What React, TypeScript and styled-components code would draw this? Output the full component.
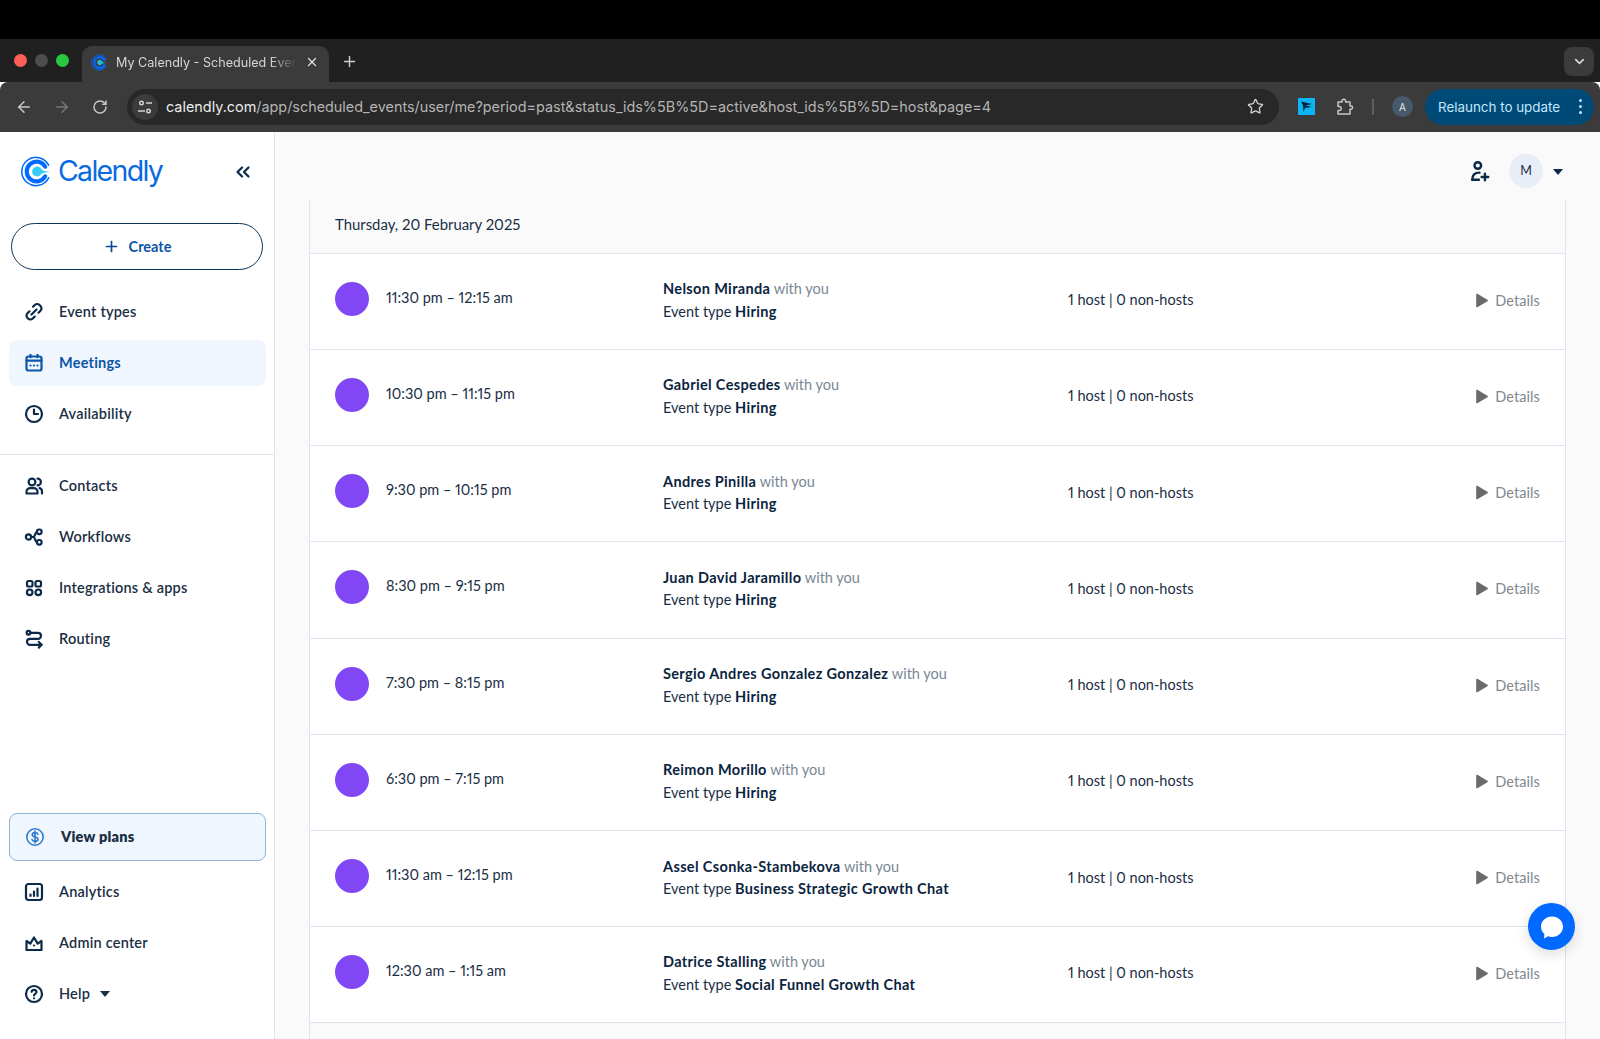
import React from "react";
import styled, { createGlobalStyle } from "styled-components";
import { ChevronDown, Plus, RotateCw, Star, X, ArrowLeft, ArrowRight, ChevronsLeft } from "lucide-react";

const GlobalStyle = createGlobalStyle`
  html, body { margin: 0; padding: 0; height: 100%; overflow: hidden; }
  body { font-family: Lato, "Open Sans", sans-serif; color: #1a2e44; font-variant-numeric: proportional-nums; }
  * { box-sizing: border-box; }
`;

const Page = styled.div`
  height: 1039px;
  display: flex;
  flex-direction: column;
  position: relative;
  overflow: hidden;
`;
const BlackBar = styled.div`
  height: 39px;
  background: #000;
`;
// browser chrome
const TabStrip = styled.div`
  height: 43px;
  background: #202020;
  display: flex;
  align-items: flex-end;
  padding-left: 14px;
`;
const Dot = styled.span<{ $color: string }>`
  width: 13px;
  height: 13px;
  border-radius: 50%;
  background: ${(p) => p.$color};
  margin-right: 8px;
  margin-bottom: 15px;
`;
const Tab = styled.div`
  width: 247px;
  height: 36px;
  margin-left: 5px;
  background: #3b3b3b;
  border-radius: 10px 10px 0 0;
  display: flex;
  align-items: center;
  padding: 0 10px 4px 9px;
  color: #d6d6d6;
  font-family: Inter, sans-serif;
  font-size: 12.6px;
`;
const TabTitle = styled.span`
  flex: 1;
  margin: 0 8px;
  white-space: nowrap;
  overflow: hidden;
  mask-image: linear-gradient(90deg, #000 85%, transparent);
`;
const NewTab = styled.div`
  margin-left: 12px;
  margin-bottom: 9px;
  height: 24px;
  display: flex;
  align-items: center;
  color: #d0d0d0;
`;
const TabMenu = styled.div`
  margin-left: auto;
  margin-right: 6px;
  margin-bottom: 6px;
  width: 30px;
  height: 29px;
  border-radius: 8px;
  background: #3b3b3b;
  color: #d8d8d8;
  display: flex;
  align-items: center;
  justify-content: center;
`;
const Toolbar = styled.div`
  height: 50px;
  background: #3b3b3b;
  border-radius: 8px 8px 0 0;
  display: flex;
  align-items: center;
  padding: 0 6px 1px 15px;
  color: #c8c8c8;
`;
const NavButton = styled.div<{ $dim?: boolean }>`
  width: 18px;
  margin-right: 20px;
  display: flex;
  justify-content: center;
  color: ${(p) => (p.$dim ? "#777" : "#c8c8c8")};
`;
const AddressBar = styled.div`
  width: 1152px;
  height: 36px;
  margin-left: -2px;
  border-radius: 18px;
  background: #282828;
  display: flex;
  align-items: center;
  padding: 0 15px 0 5px;
`;
const TuneBadge = styled.div`
  width: 26px;
  height: 26px;
  border-radius: 50%;
  background: #3b3b3b;
  display: flex;
  align-items: center;
  justify-content: center;
`;
const Url = styled.div`
  flex: 1;
  margin-left: 8px;
  font-family: Inter, sans-serif;
  font-size: 14.4px;
  color: #b4b4b4;
  white-space: nowrap;
  span {
    color: #ececec;
  }
`;
const ExtIcon = styled.div`
  width: 17px;
  height: 17px;
  margin-left: 19px;
  background: #0cb4f4;
  display: flex;
  align-items: center;
  justify-content: center;
`;
const PuzzleSlot = styled.div`
  margin-left: 21px;
  display: flex;
`;
const ToolbarSep = styled.div`
  width: 2px;
  height: 16px;
  margin-left: 18px;
  background: #5e5e5e;
`;
const ProfileBadge = styled.div`
  width: 21px;
  height: 21px;
  margin-left: 18px;
  border-radius: 50%;
  background: #47596a;
  color: #e4e8ec;
  font-family: Inter, sans-serif;
  font-size: 10px;
  display: flex;
  align-items: center;
  justify-content: center;
`;
const RelaunchPill = styled.div`
  width: 169px;
  height: 36px;
  margin-left: 12px;
  border-radius: 18px;
  background: #004a77;
  color: #c2e7ff;
  font-family: Inter, sans-serif;
  font-size: 13.4px;
  display: flex;
  align-items: center;
  justify-content: space-between;
  padding: 0 12px 0 13px;
  white-space: nowrap;
`;
const KebabDots = styled.div`
  display: flex;
  flex-direction: column;
  gap: 3px;
  i {
    width: 3px;
    height: 3px;
    border-radius: 50%;
    background: #c2e7ff;
  }
`;
// app
const Body = styled.div`
  flex: 1;
  display: flex;
  min-height: 0;
`;
const Sidebar = styled.aside`
  width: 275px;
  flex-shrink: 0;
  background: #fff;
  border-right: 1px solid #dfe3ea;
  display: flex;
  flex-direction: column;
  padding-bottom: 22px;
`;
const LogoRow = styled.div`
  height: 91px;
  padding: 0 20px 12px 21px;
  display: flex;
  align-items: center;
`;
const Wordmark = styled.span`
  margin-left: 6px;
  font-family: Inter, sans-serif;
  font-size: 28.5px;
  font-weight: 400;
  letter-spacing: -1.7px;
  color: #0a6ae0;
  margin-top: -2px;
`;
const CollapseButton = styled.div`
  margin-left: auto;
  display: flex;
  color: #0b2a4a;
`;
const CreateButton = styled.div`
  height: 47px;
  margin: 0 11px;
  border: 1px solid #0b3558;
  border-radius: 24px;
  display: flex;
  align-items: center;
  justify-content: center;
  gap: 9px;
  color: #0b56a8;
  font-size: 14.5px;
  font-weight: 700;
`;
const NavGroup = styled.nav<{ $top: number }>`
  display: flex;
  flex-direction: column;
  gap: 5px;
  padding: 0 9px;
  margin-top: ${(p) => p.$top}px;
`;
const NavItem = styled.div<{ $active?: boolean }>`
  height: 46px;
  width: 257px;
  border-radius: 8px;
  display: flex;
  align-items: center;
  padding: 0 0 1px 15px;
  gap: 15px;
  font-size: 14.5px;
  letter-spacing: 0.22px;
  font-weight: ${(p) => (p.$active ? 700 : 600)};
  color: ${(p) => (p.$active ? "#0b56a8" : "#1a2e44")};
  background: ${(p) => (p.$active ? "#f0f6fe" : "transparent")};
`;
const PlansItem = styled(NavItem)`
  height: 47.5px;
  background: #f0f6fe;
  border: 1px solid #8fb3dc;
  font-weight: 800;
  padding: 0 0 0 15px;
  gap: 16px;
  margin-bottom: 3.5px;
`;
const HelpCaret = styled.span`
  margin-left: -5px;
  width: 0;
  height: 0;
  border-left: 5.5px solid transparent;
  border-right: 5.5px solid transparent;
  border-top: 6px solid #1a2e44;
`;
const Divider = styled.div`
  height: 1px;
  background: #dfe3ea;
  margin-top: 17px;
`;
const BottomNav = styled(NavGroup)`
  margin-top: auto;
`;
const Main = styled.main`
  flex: 1;
  min-width: 0;
  background: #fafafa;
  display: flex;
  flex-direction: column;
  padding: 0 34px;
`;
const TopBar = styled.div`
  height: 68px;
  flex-shrink: 0;
  display: flex;
  align-items: center;
  justify-content: flex-end;
  margin-right: -34px;
  padding: 9px 37px 0 0;
  color: #0b2a4a;
`;
const UserAvatar = styled.div`
  width: 34px;
  height: 34px;
  margin-left: 18px;
  border-radius: 50%;
  background: #e8edf7;
  display: flex;
  align-items: center;
  justify-content: center;
  font-size: 12.5px;
  color: #1a2e44;
`;
const UserCaret = styled.span`
  margin-left: 10px;
  margin-top: 2px;
  width: 0;
  height: 0;
  border-left: 5.5px solid transparent;
  border-right: 5.5px solid transparent;
  border-top: 6px solid #0b2a4a;
`;
const Card = styled.section`
  flex: 1;
  border-left: 1px solid #dbe4f0;
  border-right: 1px solid #dbe4f0;
`;
const DateHeader = styled.div`
  height: 52.5px;
  padding: 0 25px 4px;
  display: flex;
  align-items: center;
  font-size: 14.9px;
  color: #1a2e44;
`;
const Row = styled.div`
  height: 96.25px;
  display: grid;
  grid-template-columns: 51px 277px 405px 1fr auto;
  align-items: center;
  padding: 0 25px;
  background: #fff;
  border-top: 1px solid #dde5ef;
  &:last-child {
    border-bottom: 1px solid #dde5ef;
  }
`;
const Bullet = styled.div`
  width: 34px;
  height: 34px;
  margin-bottom: 5px;
  border-radius: 50%;
  background: #8247f5;
`;
const TimeText = styled.div`
  margin-bottom: 8px;
  font-size: 14.5px;
  color: #1a2e44;
`;
const Invitee = styled.div`
  margin-bottom: 1px;
  font-size: 14.5px;
  line-height: 22.5px;
  color: #1a2e44;
  b {
    font-weight: 700;
    letter-spacing: 0.35px;
    color: #0b2440;
  }
`;
const WithYou = styled.span`
  color: #7a8794;
`;
const Hosts = styled.div`
  margin-bottom: 3px;
  font-size: 14.5px;
  color: #1a2e44;
`;
const Details = styled.div`
  display: flex;
  align-items: center;
  gap: 7px;
  margin-bottom: 2px;
  font-size: 14.5px;
  letter-spacing: 0.1px;
  color: #808890;
`;
const Triangle = styled.svg`
  display: block;
`;
const ChatBubble = styled.div`
  position: absolute;
  left: 1528px;
  top: 903px;
  width: 47px;
  height: 47px;
  border-radius: 50%;
  background: #0069ff;
  box-shadow: 0 4px 14px rgba(0, 0, 0, 0.14);
  display: flex;
  align-items: center;
  justify-content: center;
`;

const Ico = ({ children, size = 20, stroke = "#0b2a4a" }: { children: React.ReactNode; size?: number; stroke?: string }) => (
  <svg width={size} height={size} viewBox="0 0 20 20" fill="none" stroke={stroke} strokeWidth={2.2} strokeLinecap="round" strokeLinejoin="round">
    {children}
  </svg>
);

const CalendlyMark = ({ size }: { size: number }) => (
  <svg width={size} height={size} viewBox="0 0 32 32" fill="none" strokeLinecap="round">
    <path d="M28.5 9.500A14.600 14.600 0 1 0 28.500 22.500" stroke="#0069ff" strokeWidth="1.600" />
    <path d="M25 11A10.200 10.200 0 1 0 25 21" stroke="#0069ff" strokeWidth="4.200" />
    <path d="M11.500 16a5 5 0 0 1 9-3c1.500 2 3 3 8 3s-6.500 1-8 3a5 5 0 0 1-9-3z" fill="#1ec8f5" opacity="0.9" />
  </svg>
);

const LinkIcon = () => (
  <Ico>
    <path d="M9 4.800l1.800-1.800a3.300 3.300 0 0 1 4.700 0l1 1a3.300 3.300 0 0 1 0 4.700L14.500 10.700" />
    <path d="M12.500 7.500L7.500 12.500" />
    <path d="M5.500 9.300L3.500 11.300a3.300 3.300 0 0 0 0 4.700l.5.500a3.300 3.300 0 0 0 4.700 0l2-1.900" />
  </Ico>
);
const CalendarIcon = ({ stroke }: { stroke: string }) => (
  <Ico stroke={stroke}>
    <rect x="2.500" y="3.500" width="15" height="14" rx="2" />
    <path d="M2.500 7.600h15M6.500 1.800v2.400M13.500 1.800v2.400" />
    <path d="M6.500 12.500h.01M10 12.500h.01M13.500 12.500h.01" />
  </Ico>
);
const ClockIcon = () => (
  <Ico>
    <circle cx="10" cy="10" r="8" />
    <path d="M10 5.500V10h4" />
  </Ico>
);
const ContactsIcon = () => (
  <Ico>
    <circle cx="8" cy="6" r="3.400" />
    <path d="M2.500 17.500v-1.700a3.600 3.600 0 0 1 3.600-3.600h3.800a3.600 3.600 0 0 1 3.600 3.600v1.700z" />
    <path d="M13.500 2.600a3.400 3.400 0 0 1 0 6.800M15.500 12.200c1.500.3 2.500 1.700 2.500 3.400v1.900" />
  </Ico>
);
const WorkflowIcon = () => (
  <Ico>
    <circle cx="4.500" cy="10" r="2.600" />
    <rect x="13" y="2.500" width="4.600" height="4.600" rx="2" />
    <rect x="13" y="13" width="4.600" height="4.600" rx="2" />
    <path d="M7 10h2.500c1.500 0 1.500-5 3.500-5M9.500 10c1.500 0 1.500 5 3.500 5" />
  </Ico>
);
const GridIcon = () => (
  <Ico>
    <rect x="3" y="3" width="5.500" height="5.500" rx="1.600" />
    <rect x="11.500" y="3" width="5.500" height="5.500" rx="1.600" />
    <circle cx="5.700" cy="14.300" r="2.800" />
    <circle cx="14.300" cy="14.300" r="2.800" />
  </Ico>
);
const RoutingIcon = () => (
  <Ico>
    <circle cx="4.500" cy="3.800" r="1.900" />
    <path d="M6.500 3.800h7.500a3 3 0 0 1 0 6H6a3 3 0 0 0 0 6h11.500" />
    <path d="M14.800 13l2.800 2.800-2.800 2.800" />
  </Ico>
);
const DollarIcon = () => (
  <Ico stroke="#2f7ad0">
    <circle cx="10" cy="10" r="8.200" strokeWidth="1.600" />
    <path strokeWidth="1.600" d="M12.800 7.200c-.4-1-1.400-1.600-2.800-1.600-1.600 0-2.800.8-2.800 2.200 0 3 5.800 1.400 5.800 4.400 0 1.400-1.300 2.200-3 2.200-1.500 0-2.600-.7-3-1.800M10 4v12" />
  </Ico>
);
const ChartIcon = () => (
  <Ico>
    <rect x="2" y="2" width="16" height="16" rx="2.400" />
    <path d="M6.500 14v-1.500M10 14V9.500M13.500 14V6.500" />
  </Ico>
);
const CrownIcon = () => (
  <Ico>
    <path d="M2.500 8l3.800 2.600L10 4.500l3.700 6.100L17.500 8v9h-15z" />
    <path d="M10 12.500v.01" />
  </Ico>
);
const HelpIcon = () => (
  <Ico>
    <circle cx="10" cy="10" r="8" />
    <path d="M7.600 7.800A2.500 2.500 0 0 1 12.500 8c0 1.600-2.500 2-2.500 3.400M10 14.300v.01" />
  </Ico>
);
const UserPlusIcon = () => (
  <Ico size={22}>
    <circle cx="8" cy="5" r="3" />
    <path d="M3 18c0-3.500 1.500-6.500 6.500-6.500" />
    <path d="M3 18h6M14.500 12.500v6M11.500 15.500h6" />
  </Ico>
);
const TuneIcon = () => (
  <svg width="16" height="16" viewBox="0 0 16 16" fill="none" stroke="#d4d4d4" strokeWidth="1.400">
    <circle cx="4.500" cy="4" r="1.800" />
    <path d="M9 4h6M1 12h7" />
    <circle cx="11.500" cy="12" r="1.800" />
  </svg>
);
const PuzzleIcon = () => (
  <svg width="18" height="18" viewBox="0 0 18 18" fill="none" stroke="#c8c8c8" strokeWidth="1.500" strokeLinejoin="round">
    <path d="M2 4h4V3a1.800 1.800 0 0 1 3.600 0v1H14v4h1a1.600 1.600 0 0 1 0 3.200h-1V16H2v-3.500h1.200a2 2 0 0 0 0-4H2z" />
  </svg>
);
const ExtGlyph = () => (
  <svg width="13" height="13" viewBox="0 0 13 13" fill="#06263c">
    <path d="M1 1.500L12 4 5.500 5.500 12 7 5 8l-1.500 4L3 5.500z" />
  </svg>
);
const BubbleGlyph = () => (
  <svg width="28" height="28" viewBox="0 0 28 28" fill="#fff">
    <path d="M14 3.500c6.200 0 11 4.400 11 10.200S20.200 24 14 24c-1.400 0-2.800-.2-4-.7L6 25.500l.4-4.500C4.200 19.100 3 16.600 3 13.700 3 7.900 7.800 3.500 14 3.500z" />
  </svg>
);

const TOP_NAV = [
  { label: "Event types", icon: <LinkIcon /> },
  { label: "Meetings", icon: <CalendarIcon stroke="#0b56a8" />, active: true },
  { label: "Availability", icon: <ClockIcon /> },
];
const MID_NAV = [
  { label: "Contacts", icon: <ContactsIcon /> },
  { label: "Workflows", icon: <WorkflowIcon /> },
  { label: "Integrations & apps", icon: <GridIcon /> },
  { label: "Routing", icon: <RoutingIcon /> },
];
const EVENTS = [
  { time: "11:30 pm – 12:15 am", name: "Nelson Miranda", type: "Hiring" },
  { time: "10:30 pm – 11:15 pm", name: "Gabriel Cespedes", type: "Hiring" },
  { time: "9:30 pm – 10:15 pm", name: "Andres Pinilla", type: "Hiring" },
  { time: "8:30 pm – 9:15 pm", name: "Juan David Jaramillo", type: "Hiring" },
  { time: "7:30 pm – 8:15 pm", name: "Sergio Andres Gonzalez Gonzalez", type: "Hiring" },
  { time: "6:30 pm – 7:15 pm", name: "Reimon Morillo", type: "Hiring" },
  { time: "11:30 am – 12:15 pm", name: "Assel Csonka-Stambekova", type: "Business Strategic Growth Chat" },
  { time: "12:30 am – 1:15 am", name: "Datrice Stalling", type: "Social Funnel Growth Chat" },
];

const App: React.FC = () => {
  return (
    <Page>
      <GlobalStyle />
      <BlackBar />
      <TabStrip>
        <Dot $color="#ff5f57" />
        <Dot $color="#4d4d4d" />
        <Dot $color="#28c840" />
        <Tab>
          <CalendlyMark size={17} />
          <TabTitle>My Calendly - Scheduled Events</TabTitle>
          <X size={14} color="#e0e0e0" strokeWidth={2.2} />
        </Tab>
        <NewTab>
          <Plus size={17} />
        </NewTab>
        <TabMenu>
          <ChevronDown size={15} strokeWidth={2.6} />
        </TabMenu>
      </TabStrip>
      <Toolbar>
        <NavButton>
          <ArrowLeft size={18} />
        </NavButton>
        <NavButton $dim>
          <ArrowRight size={18} />
        </NavButton>
        <NavButton>
          <RotateCw size={16} strokeWidth={2.2} />
        </NavButton>
        <AddressBar>
          <TuneBadge>
            <TuneIcon />
          </TuneBadge>
          <Url>
            <span>calendly.com</span>/app/scheduled_events/user/me?period=past&status_ids%5B%5D=active&host_ids%5B%5D=host&page=4
          </Url>
          <Star size={17} color="#d4d4d4" strokeWidth={1.8} />
        </AddressBar>
        <ExtIcon>
          <ExtGlyph />
        </ExtIcon>
        <PuzzleSlot>
          <PuzzleIcon />
        </PuzzleSlot>
        <ToolbarSep />
        <ProfileBadge>A</ProfileBadge>
        <RelaunchPill>
          Relaunch to update
          <KebabDots>
            <i />
            <i />
            <i />
          </KebabDots>
        </RelaunchPill>
      </Toolbar>
      <Body>
        <Sidebar>
          <LogoRow>
            <CalendlyMark size={31} />
            <Wordmark>Calendly</Wordmark>
            <CollapseButton>
              <ChevronsLeft size={22} strokeWidth={2.4} />
            </CollapseButton>
          </LogoRow>
          <CreateButton>
            <Plus size={17} strokeWidth={2.4} color="#0b4a8f" />
            Create
          </CreateButton>
          <NavGroup $top={19}>
            {TOP_NAV.map((n) => (
              <NavItem key={n.label} $active={n.active}>
                {n.icon}
                {n.label}
              </NavItem>
            ))}
          </NavGroup>
          <Divider />
          <NavGroup $top={8}>
            {MID_NAV.map((n) => (
              <NavItem key={n.label}>
                {n.icon}
                {n.label}
              </NavItem>
            ))}
          </NavGroup>
          <BottomNav $top={0}>
            <PlansItem>
              <DollarIcon />
              View plans
            </PlansItem>
            <NavItem>
              <ChartIcon />
              Analytics
            </NavItem>
            <NavItem>
              <CrownIcon />
              Admin center
            </NavItem>
            <NavItem>
              <HelpIcon />
              Help
              <HelpCaret />
            </NavItem>
          </BottomNav>
        </Sidebar>
        <Main>
          <TopBar>
            <UserPlusIcon />
            <UserAvatar>M</UserAvatar>
            <UserCaret />
          </TopBar>
          <Card>
            <DateHeader>Thursday, 20 February 2025</DateHeader>
            {EVENTS.map((e) => (
              <Row key={e.name}>
                <Bullet />
                <TimeText>{e.time}</TimeText>
                <Invitee>
                  <b>{e.name}</b> <WithYou>with you</WithYou>
                  <br />
                  Event type <b>{e.type}</b>
                </Invitee>
                <Hosts>1 host | 0 non-hosts</Hosts>
                <Details>
                  <Triangle width="12" height="15" viewBox="0 0 12 15">
                    <path d="M1 1.500L11 7.500 1 13.500z" fill="#6b6b6b" stroke="#6b6b6b" strokeWidth="1.600" strokeLinejoin="round" />
                  </Triangle>
                  Details
                </Details>
              </Row>
            ))}
          </Card>
        </Main>
      </Body>
      <ChatBubble>
        <BubbleGlyph />
      </ChatBubble>
    </Page>
  );
};

export default App;
